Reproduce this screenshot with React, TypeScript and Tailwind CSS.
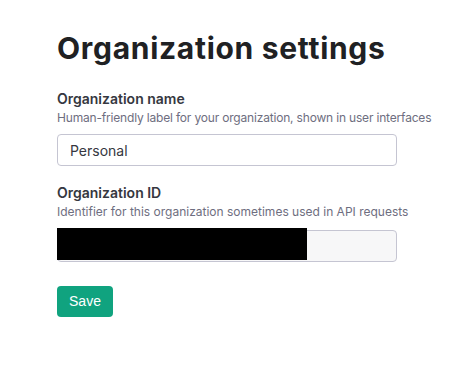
import { useState } from "react";

export default function App() {
  const [name, setName] = useState("Personal");

  return (
    <main className="min-h-[367px] bg-white pl-[57px] pt-[30px] font-['Inter',sans-serif] text-[#202123]">
      <h1 className="text-[30px] font-bold leading-[36px] tracking-[0.7px]">Organization settings</h1>

      <section className="mt-[23px]">
        <label className="block">
          <span className="block text-[14px] font-semibold leading-[20px] text-[#353740]">
            Organization name
          </span>
          <span className="mt-[1px] block whitespace-nowrap text-[12px] leading-[16px] tracking-[-0.18px] text-[#6e6e80]">
            Human-friendly label for your organization, shown in user interfaces
          </span>
          <input
            className="mt-[8px] h-[32px] w-[340px] rounded-[4px] border border-[#c5c5d2] bg-white px-[12px] text-[14px] text-[#353740] outline-none"
            onChange={(event) => setName(event.target.value)}
            value={name}
          />
        </label>

        <label className="mt-[17px] block">
          <span className="block text-[14px] font-semibold leading-[20px] text-[#353740]">
            Organization ID
          </span>
          <span className="mt-[1px] block whitespace-nowrap text-[12px] leading-[16px] text-[#6e6e80]">
            Identifier for this organization sometimes used in API requests
          </span>
          <div className="relative mt-[10px] w-[340px]">
            <input
              className="h-[32px] w-[340px] rounded-[4px] border border-[#c5c5d2] bg-[#f7f7f8] px-[12px] text-[14px] text-[#6e6e80] outline-none"
              disabled
              value=""
              readOnly
            />
            {/* redacted id */}
            <div className="absolute left-0 top-[-2px] h-[32px] w-[250px] bg-black" />
          </div>
        </label>

        <button
          className="mt-[24px] h-[31px] w-[56px] rounded-[4px] bg-[#10a37f] font-['Liberation_Sans',Arial,sans-serif] text-[14px] text-white"
          type="button"
        >
          Save
        </button>
      </section>
    </main>
  );
}
